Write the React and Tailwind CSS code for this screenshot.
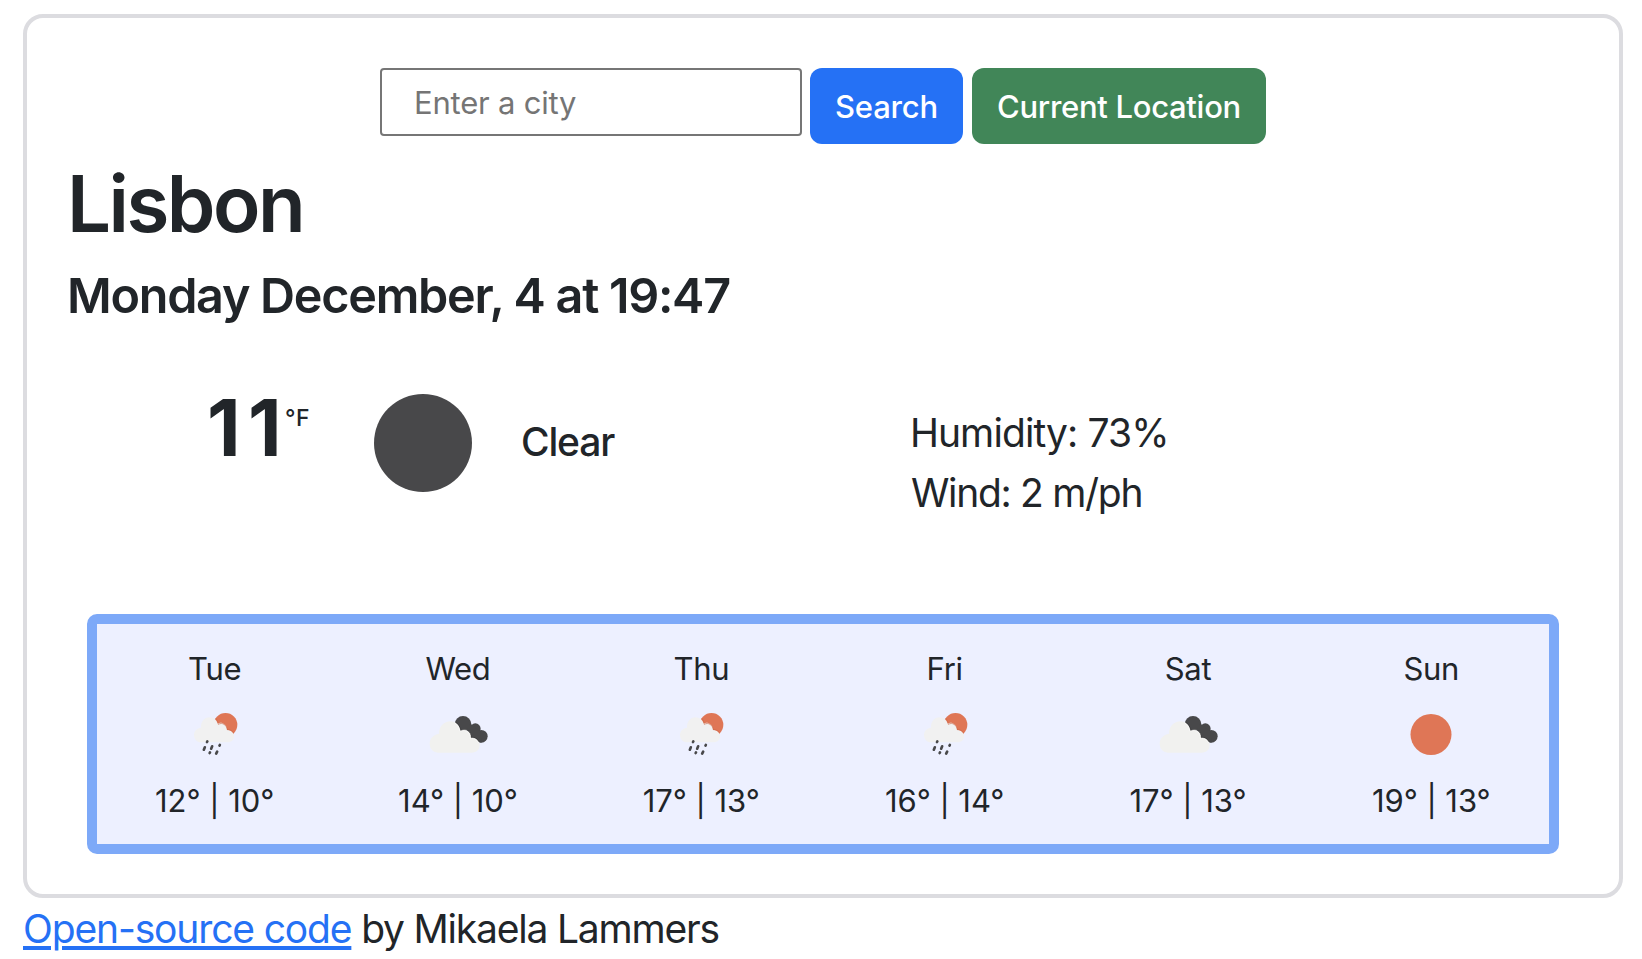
import React from "react";

const days = [
  { day: "Tue", icon: "rain", temps: "12° | 10°" },
  { day: "Wed", icon: "clouds", temps: "14° | 10°" },
  { day: "Thu", icon: "rain", temps: "17° | 13°" },
  { day: "Fri", icon: "rain", temps: "16° | 14°" },
  { day: "Sat", icon: "clouds", temps: "17° | 13°" },
  { day: "Sun", icon: "sun", temps: "19° | 13°" },
];

function RainIcon() {
  return (
    <svg viewBox="-16 0 240 195" className="h-[65px] w-[80px]">
      <circle cx="135.5" cy="74.5" r="35.5" fill="#df7656" />
      <path
        d="M62 127 C49 127 41 117 41 105 C41 93 50 84 62 83 C61 65 72 52 88 52 C99 52 108 58 112 70 C118 67 125 67 131 72 C137 76 140 82 140 90 C152 90 161 98 161 109 C161 120 153 127 143 127 Z"
        fill="#f1f1f1"
      />
      <path
        d="M107 55 C110 60 113 65 114 73 C126 66 139 75 141 89 C149 88 155 92 160 99"
        fill="none"
        stroke="#cf6a4b"
        strokeWidth="2"
      />
      <g stroke="#48484a" strokeWidth="8" strokeLinecap="round">
        <path d="M81 124 l-1 2 M73.500 142 l-3 7 M95.500 139 l-3 7 M118.500 135 l-1 2 M89 157 l-1 2 M110.500 155 l-3 6" />
      </g>
    </svg>
  );
}

function CloudsIcon() {
  return (
    <svg viewBox="-6 0 240 195" className="h-[65px] w-[80px]">
      <g fill="#48484a">
        <circle cx="129" cy="73" r="25" />
        <circle cx="166" cy="86" r="16" />
        <circle cx="184" cy="109" r="19" />
        <path d="M129 98 L152 72 L182 96 L184 128 L150 118 Z" />
      </g>
      <path
        d="M56 158 C40 158 29 146 29 131 C29 116 40 103 57 101 C57 79 72 64 92 64 C107 64 118 75 122 92 C130 87 138 88 145 93 C152 98 154 105 153 114 C167 112 179 121 179 135 C179 149 169 158 155 158 Z"
        fill="#f1f1ef"
      />
      <path
        d="M105 66 C114 71 120 80 122 92 C139 84 154 95 153 113 C163 111 171 115 177 126"
        fill="none"
        stroke="#303032"
        strokeWidth="2"
      />
      <path
        d="M103 67 C112 72 118 81 120 94 C138 86 152 97 151 115 C162 113 170 117 176 129"
        fill="none"
        stroke="#fafafa"
        strokeWidth="2.500"
      />
    </svg>
  );
}

function SunIcon() {
  return (
    <svg viewBox="0 0 80 65" className="h-[65px] w-[80px]">
      <circle cx="40" cy="34.500" r="20.500" fill="#df7656" />
    </svg>
  );
}

const icons = { rain: RainIcon, clouds: CloudsIcon, sun: SunIcon };

function SearchForm() {
  return (
    <form className="flex h-[76px] items-start pl-[353px]" onSubmit={(e) => e.preventDefault()}>
      <input
        type="text"
        placeholder="Enter a city"
        className="h-[68px] w-[422px] rounded-[4px] border-2 border-[#767676] bg-white pl-[32px] text-[31px] tracking-[-0.21px] outline-none placeholder:text-[#757575]"
      />
      <button className="ml-2 h-[76px] w-[153px] rounded-[12px] bg-[#2571f5] pt-[2px] text-[31px] font-[450] tracking-[-0.2px] text-white">
        Search
      </button>
      <button className="ml-[9px] h-[76px] w-[294px] rounded-[12px] bg-[#418658] pt-[2px] text-[31px] font-[450] tracking-[-0.3px] text-white">
        Current Location
      </button>
    </form>
  );
}

function Current() {
  return (
    <section className="flex h-[288px] items-start">
      <div className="flex pt-[54px] pl-[180px]">
        <strong className="w-[76px] text-[78px] leading-[96px] font-bold">
          <span className="tracking-[7.37px]">1</span>1
        </strong>
        <span className="pt-[21px] pl-[2px] text-[23px] leading-[34px] font-[450] tracking-[0.4px]">°F</span>
      </div>
      <svg viewBox="0 0 100 100" className="mt-[67px] ml-[63px] size-[100px] shrink-0">
        <circle cx="50" cy="50" r="49" fill="#48484a" />
      </svg>
      <div className="mt-[86px] ml-[48px] w-[389px] text-[39px] leading-[60px] font-[550] tracking-[-1.1px]">
        Clear
      </div>
      <ul className="mt-[77px] h-[111px] overflow-hidden text-[39px] leading-[60px] font-[430] whitespace-nowrap">
        <li className="tracking-[-0.9px]">Humidity: 73%</li>
        <li className="pl-px tracking-[-1.3px]">Wind: 2 m/ph</li>
      </ul>
    </section>
  );
}

function Forecast() {
  return (
    <section className="ml-[60px] h-[240px] w-[1472px] rounded-[10px] border-[10px] border-[#7da9f8] bg-[#edf0ff]">
      <div className="-mx-[4px] grid grid-cols-6">
        {days.map(({ day, icon, temps }) => {
          const Icon = icons[icon];
          return (
            <div key={day} className="flex flex-col items-center pt-[21px] text-[31px] leading-[48px] font-[430]">
              <div className="tracking-[-0.3px]">{day}</div>
              <div className="mt-[7px]">
                <Icon />
              </div>
              <div className="mt-[12px] tracking-[-0.05px]">{temps}</div>
            </div>
          );
        })}
      </div>
    </section>
  );
}

export default function App() {
  return (
    <div className="h-[959px] overflow-hidden bg-white pt-[14px] pl-[23px] font-[Inter,sans-serif] text-[#212529]">
      <main className="h-[884px] w-[1600px] rounded-[20px] border-4 border-[#dcdce0] pt-[50px]">
        <SearchForm />
        <h1 className="mt-[12px] pl-[40px] text-[78px] leading-[96px] font-[560] tracking-[-2.5px]">Lisbon</h1>
        <h2 className="mt-[14px] pl-[40px] text-[48.5px] leading-[60px] font-[580] tracking-[-1.27px]">
          Monday December, 4 at 19:47
        </h2>
        <Current />
        <Forecast />
      </main>
      <footer className="mt-px text-[39px] leading-[60px] font-[430]">
        <a
          href="#"
          className="tracking-[-1.15px] text-[#2571f5] underline decoration-[4px] underline-offset-[3px]"
        >
          Open-source code
        </a>
        <span className="tracking-[-1.2px]"> by Mikaela Lammers</span>
      </footer>
    </div>
  );
}
